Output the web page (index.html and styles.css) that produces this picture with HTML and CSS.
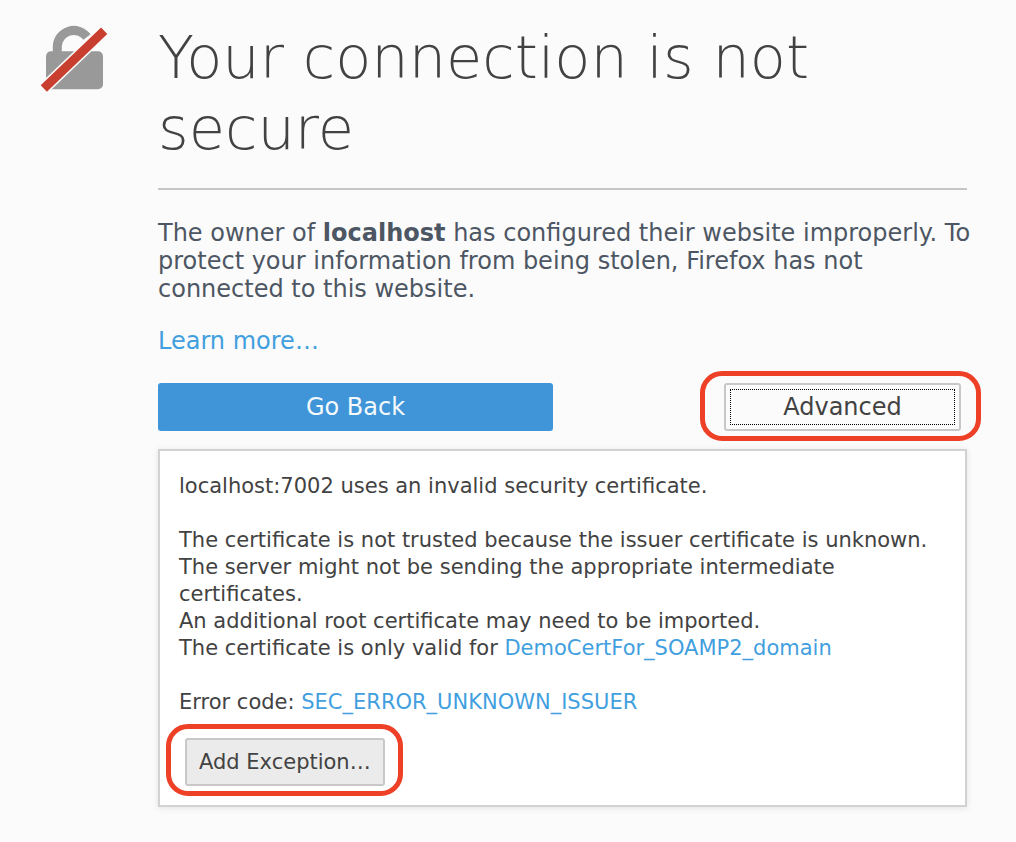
FILE: index.html
```html
<!DOCTYPE html>
<html lang="en">
<head>
<meta charset="utf-8">
<meta name="viewport" content="width=device-width, initial-scale=1">
<title>Insecure Connection</title>
<link rel="stylesheet" href="styles.css">
</head>
<body>
<main class="page">
  <svg class="lock" viewBox="0 0 68 68" aria-hidden="true">
    <path class="lock-shackle" d="M17.300 30V21.500A16.500 16.500 0 0 1 47 12"/>
    <rect class="lock-body" x="6" y="26.300" width="57" height="38" rx="5"/>
    <path class="lock-gap" d="M-3 70L71 -0.700"/>
    <path class="lock-slash" d="M3.800 63.500L64.200 5.800"/>
  </svg>
  <div class="content">
    <h1 class="title">Your connection is not secure</h1>
    <p class="intro">The owner of <b>localhost</b> has configured their website improperly. To protect your information from being stolen, Firefox has not connected to this website.</p>
    <p class="learn"><a href="#">Learn more…</a></p>
    <div class="actions">
      <button class="button primary" type="button">Go Back</button>
      <div class="callout callout-advanced"><button class="button advanced" type="button"><span class="focus-ring">Advanced</span></button></div>
    </div>
    <section class="panel">
      <p>localhost:7002 uses an invalid security certificate.</p>
      <p>The certificate is not trusted because the issuer certificate is unknown.<br>The server might not be sending the appropriate intermediate <br>certificates.<br>An additional root certificate may need to be imported.<br>The certificate is only valid for <a href="#">DemoCertFor_SOAMP2_domain</a></p>
      <p>Error code: <a href="#">SEC_ERROR_UNKNOWN_ISSUER</a></p>
      <div class="callout callout-exception"><button class="button exception" type="button">Add Exception…</button></div>
    </section>
  </div>
</main>
</body>
</html>
```
FILE: styles.css
```css
* { box-sizing: border-box; }
body {
  margin: 0;
  background: #fbfbfb;
  color: #424242;
  font-family: "DejaVu Sans", sans-serif;
  font-size: 21px;
  line-height: 27px;
}
p { margin: 0; }
a { color: #429fdf; text-decoration: none; }
.page {
  display: grid;
  grid-template-columns: 68px minmax(0, 1fr);
  column-gap: 50px;
  padding: 22px 49px 36px 40px;
}
.lock { width: 68px; height: 68px; margin-top: 3px; }
.lock-shackle { fill: none; stroke: #999; stroke-width: 9; }
.lock-body { fill: #999; }
.lock-gap { stroke: #fbfbfb; stroke-width: 12; }
.lock-slash { stroke: #c93f2f; stroke-width: 9; }
.title {
  margin: 0;
  padding-bottom: 24px;
  border-bottom: 2px solid #c6c6c6;
  color: #424242;
  font-size: 59px;
  font-weight: 200;
  line-height: 71px;
}
.intro, .learn { font-size: 24px; line-height: 28px; color: #4d5663; }
.intro { margin: 29px -8px 0 0; }
.learn { margin-top: 24px; }
.actions {
  display: flex;
  justify-content: space-between;
  align-items: center;
  margin-top: 28px;
  padding-right: 6px;
}
.button {
  display: block;
  height: 48px;
  padding: 0 12px;
  border: 2px solid #c8c8c8;
  border-radius: 3px;
  font: inherit;
  color: #424242;
}
.primary {
  flex: 0 1 395px;
  border: 0;
  background: #3f95d8;
  color: #f4f9fd;
  font-size: 24px;
}
.callout { position: relative; }
.callout::after {
  content: "";
  position: absolute;
  border: 5px solid #ee4026;
  border-radius: 22px;
  pointer-events: none;
}
.callout-advanced { flex: 0 1 237px; }
.callout-advanced::after { inset: -12px -20px -10px -24px; }
.advanced { width: 100%; padding: 4px; background: #fbfbfb; font-size: 24px; }
.focus-ring {
  display: flex;
  height: 100%;
  align-items: center;
  justify-content: center;
  border: 1px dotted #000;
}
.panel {
  display: flex;
  flex-direction: column;
  align-items: flex-start;
  gap: 27px;
  margin-top: 18px;
  padding: 22px 19px 19px;
  border: 2px solid #d2d2d2;
  background: #fff;
  box-shadow: 0 1px 6px #e2e2e2;
}
.callout-exception { margin: -5px 0 0 6px; }
.callout-exception::after { inset: -14px -18px -10px -19px; }
.exception { background: #ebebeb; }
```
